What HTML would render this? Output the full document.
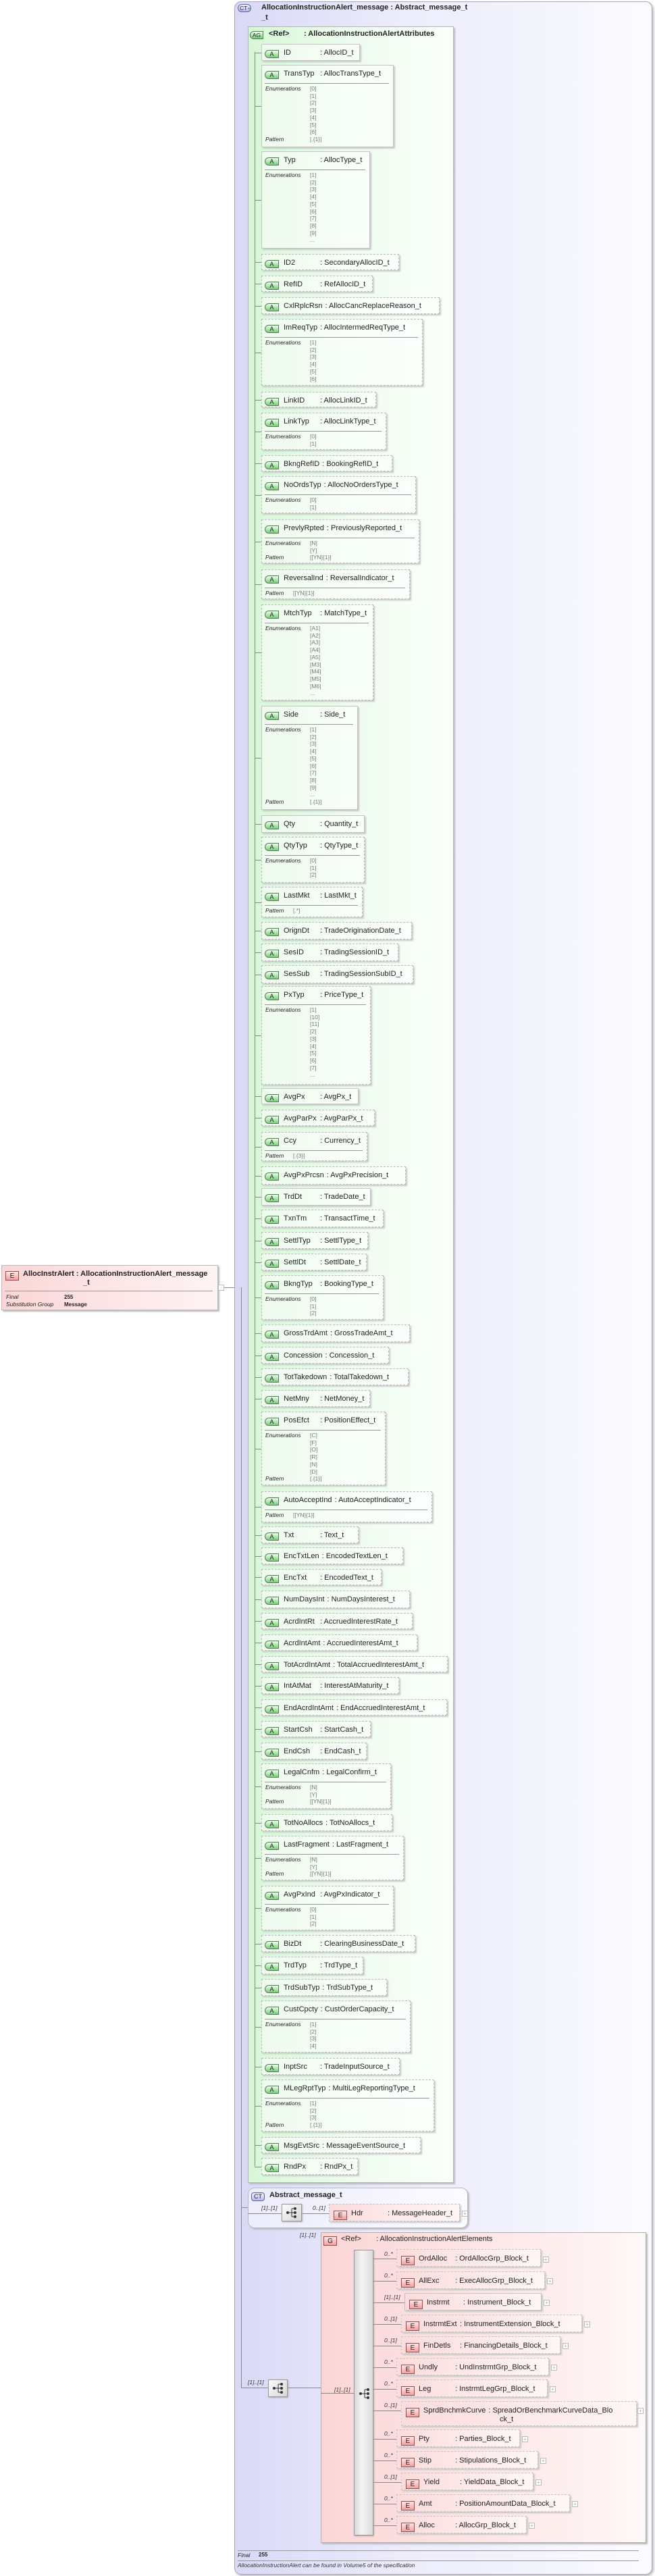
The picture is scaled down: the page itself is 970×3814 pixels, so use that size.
<!DOCTYPE html>
<html><head><meta charset="utf-8">
<style>
*{margin:0;padding:0;box-sizing:border-box}
body{width:970px;height:3814px;position:relative;background:#fff;font-family:"Liberation Sans",sans-serif;color:#222;overflow:hidden}
.abs{position:absolute}
.ct{position:absolute;left:347px;top:2px;width:619px;height:3810px;border:1px solid #a8a8b8;border-radius:10px;background:linear-gradient(90deg,#d9d9f7 0%,#ececfb 40%,#fbfbff 100%);box-shadow:2px 2px 3px #bbb}
.grn{position:absolute;left:367px;top:39px;width:305px;height:3193px;border:1px solid #b0b8b0;background:linear-gradient(90deg,#d6f7d6 0%,#eefcee 50%,#fbfffb 100%);box-shadow:2px 2px 2px #bbb}
.vl{position:absolute;border-left:1px solid #888}
.hl{position:absolute;border-top:1px solid #888}
.a{position:absolute;left:387px;border:1px dashed #bcbcbc;background:rgba(255,255,255,.55);box-shadow:2px 2px 2px #c8c8c8}
.a.s{border-style:solid;border-color:#c4c4c4}
.a:before{content:"";position:absolute;left:-11px;top:50%;width:10px;border-top:1px solid #888}
.h{position:absolute;left:4px;top:5px;white-space:nowrap;font-size:11px;line-height:15px}
.h b,.eb b{display:inline-block;width:21px;height:12px;border:1px solid #4e804e;border-radius:6px 0 0 6px;background:linear-gradient(#f0fff0,#79cc79);font-size:9px;font-weight:normal;text-align:center;line-height:11px;margin-right:7px;vertical-align:-2px;color:#222}
.h span{display:inline-block;min-width:50px;margin-right:4px}
.e{position:absolute;left:4px;right:6px;top:26px;border-top:1px solid #999}
.l{position:absolute;left:1px;top:2px;font-size:8.5px;line-height:10.7px;font-style:italic;color:#222}
.v{position:absolute;left:67px;top:2px;font-size:8.5px;line-height:10.7px;color:#777}
.v2{left:42px}
.el{position:absolute;border:1px dashed #c4c4c4;background:linear-gradient(90deg,#fbdcdc,#fff6f6);box-shadow:2px 2px 2px #c8c8c8;height:26px}
.el.s{border-style:solid}
.eh{position:absolute;left:6px;top:6px;white-space:nowrap;font-size:11px;line-height:14px}
.eh i,.eb i{display:inline-block;font-style:normal;width:20px;height:14px;border:1px solid #a04848;background:linear-gradient(#fde8e8,#f0a0a0);font-size:10px;text-align:center;line-height:13px;margin-right:6px;vertical-align:-3px}
.eh span{display:inline-block;min-width:50px;margin-right:4px}
.pl{position:absolute;width:9px;height:9px;border:1px solid #bbb;background:#fff;font-size:8px;line-height:7px;text-align:center;color:#aaa}
.c{position:absolute;font-size:8.5px;font-style:italic;color:#333;white-space:nowrap}
.seq{position:absolute;border:1px solid #999;background:linear-gradient(135deg,#fafafa,#d8d8d8);box-shadow:1px 1px 2px #aaa}
</style></head><body>

<!-- left element -->
<div class="abs" style="left:2px;top:1873px;width:321px;height:67px;border:1px solid #bbb;background:linear-gradient(90deg,#fcd6d6,#fff4f4);box-shadow:2px 2px 2px #bbb">
 <div class="eh" style="left:5px;top:5px;font-weight:bold"><i style="font-weight:normal">E</i>AllocInstrAlert : AllocationInstructionAlert_message</div>
 <div class="abs" style="left:120px;top:19px;font-size:11px;font-weight:bold">_t</div>
 <div class="abs" style="left:4px;right:7px;top:37px;border-top:1px solid #999"></div>
 <div class="abs" style="left:6px;top:41px;font-size:8.5px;font-style:italic;line-height:11px">Final<br>Substitution Group</div>
 <div class="abs" style="left:92px;top:41px;font-size:8px;font-weight:bold;line-height:11px">255<br>Message</div>
</div>
<div class="pl" style="left:323px;top:1902px">-</div>
<div class="hl" style="left:332px;top:1906px;width:16px"></div>

<!-- outer CT -->
<div class="ct"></div>
<div class="abs" style="left:352px;top:6px;width:20px;height:12px;border:1px solid #6060a0;border-radius:6px;background:linear-gradient(#f4f4ff,#b8b8f0);font-size:8.5px;line-height:10px;padding-left:2px">CT<span style="color:#2a8a2a">+</span></div>
<div class="abs" style="left:387px;top:4px;font-size:11px;font-weight:bold;line-height:15px">AllocationInstructionAlert_message : Abstract_message_t<br>_t</div>

<div class="vl" style="left:357px;top:1906px;height:1630px"></div>

<!-- green attribute group -->
<div class="grn"></div>
<div class="abs" style="left:370px;top:46px;width:20px;height:12px;border:1px solid #4e804e;border-radius:6px 0 0 6px;background:linear-gradient(#f0fff0,#79cc79);font-size:8.5px;line-height:10px;text-align:center">AG</div>
<div class="abs" style="left:398px;top:44px;font-size:11px;font-weight:bold">&lt;Ref&gt;</div>
<div class="abs" style="left:450px;top:44px;font-size:11px;font-weight:bold">: AllocationInstructionAlertAttributes</div>
<div class="vl" style="left:377px;top:77px;height:3130px"></div>

<div class="a s" style="top:65px;width:146px;height:25px"><div class="h"><b>A</b><span>ID</span>: AllocID_t</div></div>
<div class="a s" style="top:96px;width:196px;height:122px"><div class="h"><b>A</b><span>TransTyp</span>: AllocTransType_t</div><div class="e"><div class="l">Enumerations<br><br><br><br><br><br><br>Pattern</div><div class="v">[0]<br>[1]<br>[2]<br>[3]<br>[4]<br>[5]<br>[6]<br>[.{1}]</div></div></div>
<div class="a s" style="top:224px;width:161px;height:144px"><div class="h"><b>A</b><span>Typ</span>: AllocType_t</div><div class="e"><div class="l">Enumerations</div><div class="v">[1]<br>[2]<br>[3]<br>[4]<br>[5]<br>[6]<br>[7]<br>[8]<br>[9]<br>...</div></div></div>
<div class="a" style="top:376px;width:204px;height:24px"><div class="h"><b>A</b><span>ID2</span>: SecondaryAllocID_t</div></div>
<div class="a" style="top:408px;width:165px;height:24px"><div class="h"><b>A</b><span>RefID</span>: RefAllocID_t</div></div>
<div class="a" style="top:440px;width:264px;height:25px"><div class="h"><b>A</b><span>CxlRplcRsn</span>: AllocCancReplaceReason_t</div></div>
<div class="a" style="top:472px;width:239px;height:99px"><div class="h"><b>A</b><span>ImReqTyp</span>: AllocIntermedReqType_t</div><div class="e"><div class="l">Enumerations</div><div class="v">[1]<br>[2]<br>[3]<br>[4]<br>[5]<br>[6]</div></div></div>
<div class="a" style="top:580px;width:170px;height:23px"><div class="h"><b>A</b><span>LinkID</span>: AllocLinkID_t</div></div>
<div class="a" style="top:611px;width:185px;height:55px"><div class="h"><b>A</b><span>LinkTyp</span>: AllocLinkType_t</div><div class="e"><div class="l">Enumerations</div><div class="v">[0]<br>[1]</div></div></div>
<div class="a" style="top:674px;width:194px;height:24px"><div class="h"><b>A</b><span>BkngRefID</span>: BookingRefID_t</div></div>
<div class="a" style="top:705px;width:229px;height:55px"><div class="h"><b>A</b><span>NoOrdsTyp</span>: AllocNoOrdersType_t</div><div class="e"><div class="l">Enumerations</div><div class="v">[0]<br>[1]</div></div></div>
<div class="a" style="top:769px;width:234px;height:65px"><div class="h"><b>A</b><span>PrevlyRpted</span>: PreviouslyReported_t</div><div class="e"><div class="l">Enumerations<br><br>Pattern</div><div class="v">[N]<br>[Y]<br>[[YN]{1}]</div></div></div>
<div class="a" style="top:843px;width:220px;height:44px"><div class="h"><b>A</b><span>ReversalInd</span>: ReversalIndicator_t</div><div class="e"><div class="l">Pattern</div><div class="v v2">[[YN]{1}]</div></div></div>
<div class="a" style="top:895px;width:166px;height:142px"><div class="h"><b>A</b><span>MtchTyp</span>: MatchType_t</div><div class="e"><div class="l">Enumerations</div><div class="v">[A1]<br>[A2]<br>[A3]<br>[A4]<br>[A5]<br>[M3]<br>[M4]<br>[M5]<br>[M6]<br>...</div></div></div>
<div class="a s" style="top:1045px;width:143px;height:154px"><div class="h"><b>A</b><span>Side</span>: Side_t</div><div class="e"><div class="l">Enumerations<br><br><br><br><br><br><br><br><br><br>Pattern</div><div class="v">[1]<br>[2]<br>[3]<br>[4]<br>[5]<br>[6]<br>[7]<br>[8]<br>[9]<br>...<br>[.{1}]</div></div></div>
<div class="a s" style="top:1207px;width:153px;height:26px"><div class="h"><b>A</b><span>Qty</span>: Quantity_t</div></div>
<div class="a" style="top:1239px;width:153px;height:68px"><div class="h"><b>A</b><span>QtyTyp</span>: QtyType_t</div><div class="e"><div class="l">Enumerations</div><div class="v">[0]<br>[1]<br>[2]</div></div></div>
<div class="a" style="top:1313px;width:150px;height:45px"><div class="h"><b>A</b><span>LastMkt</span>: LastMkt_t</div><div class="e"><div class="l">Pattern</div><div class="v v2">[.*]</div></div></div>
<div class="a" style="top:1365px;width:223px;height:26px"><div class="h"><b>A</b><span>OrignDt</span>: TradeOriginationDate_t</div></div>
<div class="a" style="top:1397px;width:203px;height:26px"><div class="h"><b>A</b><span>SesID</span>: TradingSessionID_t</div></div>
<div class="a" style="top:1429px;width:225px;height:27px"><div class="h"><b>A</b><span>SesSub</span>: TradingSessionSubID_t</div></div>
<div class="a" style="top:1460px;width:162px;height:146px"><div class="h"><b>A</b><span>PxTyp</span>: PriceType_t</div><div class="e"><div class="l">Enumerations</div><div class="v">[1]<br>[10]<br>[11]<br>[2]<br>[3]<br>[4]<br>[5]<br>[6]<br>[7]<br>...</div></div></div>
<div class="a s" style="top:1611px;width:144px;height:24px"><div class="h"><b>A</b><span>AvgPx</span>: AvgPx_t</div></div>
<div class="a" style="top:1643px;width:168px;height:24px"><div class="h"><b>A</b><span>AvgParPx</span>: AvgParPx_t</div></div>
<div class="a" style="top:1676px;width:157px;height:43px"><div class="h"><b>A</b><span>Ccy</span>: Currency_t</div><div class="e"><div class="l">Pattern</div><div class="v v2">[.{3}]</div></div></div>
<div class="a" style="top:1727px;width:214px;height:27px"><div class="h"><b>A</b><span>AvgPxPrcsn</span>: AvgPxPrecision_t</div></div>
<div class="a s" style="top:1759px;width:162px;height:26px"><div class="h"><b>A</b><span>TrdDt</span>: TradeDate_t</div></div>
<div class="a" style="top:1791px;width:181px;height:26px"><div class="h"><b>A</b><span>TxnTm</span>: TransactTime_t</div></div>
<div class="a" style="top:1824px;width:158px;height:25px"><div class="h"><b>A</b><span>SettlTyp</span>: SettlType_t</div></div>
<div class="a" style="top:1856px;width:156px;height:25px"><div class="h"><b>A</b><span>SettlDt</span>: SettlDate_t</div></div>
<div class="a" style="top:1888px;width:181px;height:66px"><div class="h"><b>A</b><span>BkngTyp</span>: BookingType_t</div><div class="e"><div class="l">Enumerations</div><div class="v">[0]<br>[1]<br>[2]</div></div></div>
<div class="a" style="top:1961px;width:220px;height:26px"><div class="h"><b>A</b><span>GrossTrdAmt</span>: GrossTradeAmt_t</div></div>
<div class="a" style="top:1994px;width:189px;height:25px"><div class="h"><b>A</b><span>Concession</span>: Concession_t</div></div>
<div class="a" style="top:2026px;width:218px;height:25px"><div class="h"><b>A</b><span>TotTakedown</span>: TotalTakedown_t</div></div>
<div class="a" style="top:2058px;width:161px;height:25px"><div class="h"><b>A</b><span>NetMny</span>: NetMoney_t</div></div>
<div class="a" style="top:2090px;width:184px;height:109px"><div class="h"><b>A</b><span>PosEfct</span>: PositionEffect_t</div><div class="e"><div class="l">Enumerations<br><br><br><br><br><br>Pattern</div><div class="v">[C]<br>[F]<br>[O]<br>[R]<br>[N]<br>[D]<br>[.{1}]</div></div></div>
<div class="a" style="top:2208px;width:253px;height:46px"><div class="h"><b>A</b><span>AutoAcceptInd</span>: AutoAcceptIndicator_t</div><div class="e"><div class="l">Pattern</div><div class="v v2">[[YN]{1}]</div></div></div>
<div class="a" style="top:2260px;width:144px;height:25px"><div class="h"><b>A</b><span>Txt</span>: Text_t</div></div>
<div class="a" style="top:2291px;width:210px;height:25px"><div class="h"><b>A</b><span>EncTxtLen</span>: EncodedTextLen_t</div></div>
<div class="a" style="top:2323px;width:178px;height:24px"><div class="h"><b>A</b><span>EncTxt</span>: EncodedText_t</div></div>
<div class="a" style="top:2355px;width:220px;height:26px"><div class="h"><b>A</b><span>NumDaysInt</span>: NumDaysInterest_t</div></div>
<div class="a" style="top:2388px;width:224px;height:24px"><div class="h"><b>A</b><span>AcrdIntRt</span>: AccruedInterestRate_t</div></div>
<div class="a" style="top:2420px;width:231px;height:24px"><div class="h"><b>A</b><span>AcrdIntAmt</span>: AccruedInterestAmt_t</div></div>
<div class="a" style="top:2452px;width:276px;height:24px"><div class="h"><b>A</b><span>TotAcrdIntAmt</span>: TotalAccruedInterestAmt_t</div></div>
<div class="a" style="top:2483px;width:204px;height:25px"><div class="h"><b>A</b><span>IntAtMat</span>: InterestAtMaturity_t</div></div>
<div class="a" style="top:2516px;width:275px;height:24px"><div class="h"><b>A</b><span>EndAcrdIntAmt</span>: EndAccruedInterestAmt_t</div></div>
<div class="a" style="top:2548px;width:162px;height:24px"><div class="h"><b>A</b><span>StartCsh</span>: StartCash_t</div></div>
<div class="a" style="top:2580px;width:156px;height:25px"><div class="h"><b>A</b><span>EndCsh</span>: EndCash_t</div></div>
<div class="a" style="top:2611px;width:192px;height:67px"><div class="h"><b>A</b><span>LegalCnfm</span>: LegalConfirm_t</div><div class="e"><div class="l">Enumerations<br><br>Pattern</div><div class="v">[N]<br>[Y]<br>[[YN]{1}]</div></div></div>
<div class="a" style="top:2686px;width:194px;height:25px"><div class="h"><b>A</b><span>TotNoAllocs</span>: TotNoAllocs_t</div></div>
<div class="a" style="top:2718px;width:211px;height:66px"><div class="h"><b>A</b><span>LastFragment</span>: LastFragment_t</div><div class="e"><div class="l">Enumerations<br><br>Pattern</div><div class="v">[N]<br>[Y]<br>[[YN]{1}]</div></div></div>
<div class="a" style="top:2792px;width:196px;height:66px"><div class="h"><b>A</b><span>AvgPxInd</span>: AvgPxIndicator_t</div><div class="e"><div class="l">Enumerations</div><div class="v">[0]<br>[1]<br>[2]</div></div></div>
<div class="a" style="top:2865px;width:228px;height:25px"><div class="h"><b>A</b><span>BizDt</span>: ClearingBusinessDate_t</div></div>
<div class="a" style="top:2897px;width:151px;height:26px"><div class="h"><b>A</b><span>TrdTyp</span>: TrdType_t</div></div>
<div class="a" style="top:2930px;width:186px;height:25px"><div class="h"><b>A</b><span>TrdSubTyp</span>: TrdSubType_t</div></div>
<div class="a" style="top:2962px;width:221px;height:77px"><div class="h"><b>A</b><span>CustCpcty</span>: CustOrderCapacity_t</div><div class="e"><div class="l">Enumerations</div><div class="v">[1]<br>[2]<br>[3]<br>[4]</div></div></div>
<div class="a" style="top:3047px;width:205px;height:25px"><div class="h"><b>A</b><span>InptSrc</span>: TradeInputSource_t</div></div>
<div class="a" style="top:3079px;width:256px;height:77px"><div class="h"><b>A</b><span>MLegRptTyp</span>: MultiLegReportingType_t</div><div class="e"><div class="l">Enumerations<br><br><br>Pattern</div><div class="v">[1]<br>[2]<br>[3]<br>[.{1}]</div></div></div>
<div class="a" style="top:3164px;width:236px;height:24px"><div class="h"><b>A</b><span>MsgEvtSrc</span>: MessageEventSource_t</div></div>
<div class="a" style="top:3195px;width:143px;height:25px"><div class="h"><b>A</b><span>RndPx</span>: RndPx_t</div></div>

<!-- Abstract_message_t -->
<div class="hl" style="left:357px;top:3268px;width:10px"></div>
<div class="abs" style="left:367px;top:3239px;width:326px;height:60px;border:1px solid #b8b8c8;border-radius:10px;background:linear-gradient(90deg,#ececfb,#fbfbff);box-shadow:2px 2px 2px #bbb"></div>
<div class="abs" style="left:372px;top:3246px;width:20px;height:13px;border:1px solid #6060a0;border-radius:4px;background:linear-gradient(#f4f4ff,#b8b8f0);font-size:9px;line-height:11px;text-align:center">CT</div>
<div class="abs" style="left:399px;top:3244px;font-size:11px;font-weight:bold">Abstract_message_t</div>
<div class="hl" style="left:367px;top:3277px;width:120px"></div>
<div class="c" style="left:387px;top:3264px">[1]..[1]</div>
<div class="seq" style="left:417px;top:3263px;width:30px;height:26px"><svg width="28" height="24" viewBox="0 0 28 24"><circle cx="8" cy="12" r="2" fill="#333"/><path d="M8 12H14M14 6V18M14 6H19M14 12H19M14 18H19" stroke="#333" fill="none"/><circle cx="19" cy="6" r="2" fill="#333"/><circle cx="19" cy="12" r="2" fill="#333"/><circle cx="19" cy="18" r="2" fill="#333"/></svg></div>
<div class="c" style="left:463px;top:3264px">0..[1]</div>
<div class="el" style="left:487px;top:3263px;width:194px"><div class="eh"><i>E</i><span>Hdr</span>: MessageHeader_t</div></div>
<div class="pl" style="left:684px;top:3273px">+</div>

<!-- lower sequence -->
<div class="c" style="left:367px;top:3522px">[1]..[1]</div>
<div class="hl" style="left:357px;top:3535px;width:40px"></div>
<div class="seq" style="left:397px;top:3523px;width:29px;height:26px"><svg width="27" height="24" viewBox="0 0 27 24"><circle cx="8" cy="12" r="2" fill="#333"/><path d="M8 12H14M14 6V18M14 6H19M14 12H19M14 18H19" stroke="#333" fill="none"/><circle cx="19" cy="6" r="2" fill="#333"/><circle cx="19" cy="12" r="2" fill="#333"/><circle cx="19" cy="18" r="2" fill="#333"/></svg></div>
<div class="hl" style="left:426px;top:3535px;width:49px"></div>
<div class="c" style="left:444px;top:3304px">[1]..[1]</div>

<!-- G group -->
<div class="abs" style="left:475px;top:3305px;width:482px;height:460px;border:1px solid #b0b0b0;background:linear-gradient(90deg,#fcd6d6 0%,#fde6e6 50%,#fff8f8 100%);box-shadow:2px 2px 2px #bbb"></div>
<div class="abs" style="left:479px;top:3311px;width:20px;height:14px;border:1px solid #a04848;background:linear-gradient(#fde8e8,#f0a0a0);font-size:10px;line-height:13px;text-align:center">G</div>
<div class="abs" style="left:505px;top:3309px;font-size:11px">&lt;Ref&gt;</div>
<div class="abs" style="left:557px;top:3309px;font-size:11px">: AllocationInstructionAlertElements</div>
<div class="hl" style="left:475px;top:3543px;width:49px"></div>
<div class="c" style="left:495px;top:3533px">[1]..[1]</div>
<div class="seq" style="left:524px;top:3331px;width:29px;height:423px;background:linear-gradient(90deg,#d8d8d8,#f4f4f4 40%,#dcdcdc)"></div>
<svg class="abs" style="left:528px;top:3532px" width="24" height="24" viewBox="0 0 24 24"><circle cx="6" cy="12" r="2" fill="#333"/><path d="M6 12H12M12 6V18M12 6H17M12 12H17M12 18H17" stroke="#333" fill="none"/><circle cx="17" cy="6" r="2" fill="#333"/><circle cx="17" cy="12" r="2" fill="#333"/><circle cx="17" cy="18" r="2" fill="#333"/></svg>

<!-- element lines -->
<div class="hl" style="left:553px;top:3344px;width:34px"></div>
<div class="hl" style="left:553px;top:3377px;width:34px"></div>
<div class="hl" style="left:553px;top:3409px;width:46px"></div>
<div class="hl" style="left:553px;top:3441px;width:41px"></div>
<div class="hl" style="left:553px;top:3473px;width:41px"></div>
<div class="hl" style="left:553px;top:3505px;width:34px"></div>
<div class="hl" style="left:553px;top:3537px;width:34px"></div>
<div class="hl" style="left:553px;top:3569px;width:41px"></div>
<div class="hl" style="left:553px;top:3611px;width:34px"></div>
<div class="hl" style="left:553px;top:3643px;width:34px"></div>
<div class="hl" style="left:553px;top:3675px;width:41px"></div>
<div class="hl" style="left:553px;top:3707px;width:34px"></div>
<div class="hl" style="left:553px;top:3739px;width:34px"></div>

<div class="c" style="left:569px;top:3332px">0..*</div>
<div class="el" style="left:587px;top:3330px;width:214px"><div class="eh"><i>E</i><span>OrdAlloc</span>: OrdAllocGrp_Block_t</div></div><div class="pl" style="left:804px;top:3341px">+</div>
<div class="c" style="left:569px;top:3364px">0..*</div>
<div class="el" style="left:587px;top:3363px;width:220px"><div class="eh"><i>E</i><span>AllExc</span>: ExecAllocGrp_Block_t</div></div><div class="pl" style="left:810px;top:3373px">+</div>
<div class="c" style="left:569px;top:3396px">[1]..[1]</div>
<div class="el s" style="left:599px;top:3395px;width:203px"><div class="eh"><i>E</i><span>Instrmt</span>: Instrument_Block_t</div></div><div class="pl" style="left:805px;top:3405px">+</div>
<div class="c" style="left:569px;top:3428px">0..[1]</div>
<div class="el" style="left:594px;top:3427px;width:268px"><div class="eh"><i>E</i><span>InstrmtExt</span>: InstrumentExtension_Block_t</div></div><div class="pl" style="left:865px;top:3437px">+</div>
<div class="c" style="left:569px;top:3460px">0..[1]</div>
<div class="el" style="left:594px;top:3459px;width:236px"><div class="eh"><i>E</i><span>FinDetls</span>: FinancingDetails_Block_t</div></div><div class="pl" style="left:833px;top:3469px">+</div>
<div class="c" style="left:569px;top:3492px">0..*</div>
<div class="el" style="left:587px;top:3491px;width:226px"><div class="eh"><i>E</i><span>Undly</span>: UndInstrmtGrp_Block_t</div></div><div class="pl" style="left:816px;top:3501px">+</div>
<div class="c" style="left:569px;top:3524px">0..*</div>
<div class="el" style="left:587px;top:3523px;width:224px"><div class="eh"><i>E</i><span>Leg</span>: InstrmtLegGrp_Block_t</div></div><div class="pl" style="left:814px;top:3533px">+</div>
<div class="c" style="left:569px;top:3556px">0..[1]</div>
<div class="el" style="left:594px;top:3555px;width:349px;height:37px"><div class="eh"><i>E</i><span>SprdBnchmkCurve</span>: SpreadOrBenchmarkCurveData_Blo</div><div class="abs" style="left:145px;top:20px;font-size:11px">ck_t</div></div><div class="pl" style="left:944px;top:3565px">+</div>
<div class="c" style="left:569px;top:3598px">0..*</div>
<div class="el" style="left:587px;top:3597px;width:183px"><div class="eh"><i>E</i><span>Pty</span>: Parties_Block_t</div></div><div class="pl" style="left:773px;top:3607px">+</div>
<div class="c" style="left:569px;top:3630px">0..*</div>
<div class="el" style="left:587px;top:3629px;width:210px"><div class="eh"><i>E</i><span>Stip</span>: Stipulations_Block_t</div></div><div class="pl" style="left:800px;top:3639px">+</div>
<div class="c" style="left:569px;top:3662px">0..[1]</div>
<div class="el" style="left:594px;top:3661px;width:196px"><div class="eh"><i>E</i><span>Yield</span>: YieldData_Block_t</div></div><div class="pl" style="left:793px;top:3671px">+</div>
<div class="c" style="left:569px;top:3694px">0..*</div>
<div class="el" style="left:587px;top:3693px;width:257px"><div class="eh"><i>E</i><span>Amt</span>: PositionAmountData_Block_t</div></div><div class="pl" style="left:847px;top:3703px">+</div>
<div class="c" style="left:569px;top:3726px">0..*</div>
<div class="el" style="left:587px;top:3725px;width:193px"><div class="eh"><i>E</i><span>Alloc</span>: AllocGrp_Block_t</div></div><div class="pl" style="left:783px;top:3735px">+</div>

<!-- footer -->
<div class="hl" style="left:352px;top:3776px;width:594px;border-color:#999"></div>
<div class="abs" style="left:352px;top:3778px;font-size:8.5px;font-style:italic">Final</div>
<div class="abs" style="left:383px;top:3778px;font-size:8px;font-weight:bold">255</div>
<div class="hl" style="left:352px;top:3791px;width:594px;border-color:#999"></div>
<div class="abs" style="left:352px;top:3793px;font-size:8.5px;font-style:italic;color:#333">AllocationInstructionAlert can be found in Volume5 of the specification</div>

</body></html>
